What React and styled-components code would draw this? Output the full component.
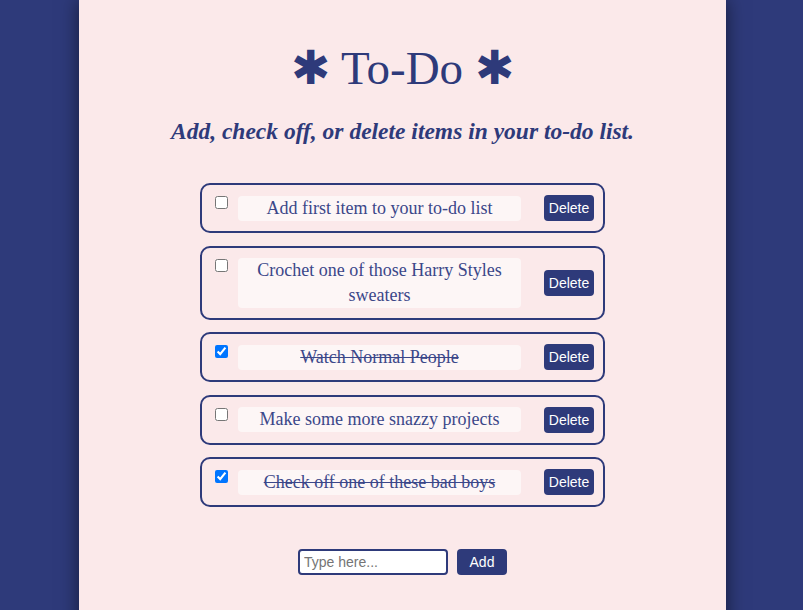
import React, { useState } from 'react'
import styled, { createGlobalStyle } from 'styled-components'

const GlobalStyle = createGlobalStyle`
    html, body {
        margin: 0;
        padding: 0;
        background-color: #2e3a7a;
        height: 100%;
    }
    body {
        font-family: "Liberation Serif", serif;
        overflow: hidden;
        padding-left: 2px;
    }
`

const Panel = styled.div`
    width: 647px;
    min-height: 700px;
    margin: 0 auto;
    background-color: #fbe9ea;
    box-shadow: 0 0 18px rgba(0, 0, 0, 0.55);
    display: flex;
    flex-direction: column;
    align-items: center;
    padding-top: 40px;
    box-sizing: border-box;
    color: #2e3a7a;
`

const Title = styled.h1`
    margin: 0;
    font-family: "Liberation Serif", serif;
    font-weight: normal;
    font-size: 47px;
    line-height: 56px;
`

const Subtitle = styled.h3`
    margin: 21px 0 0 0;
    font-family: "Liberation Serif", serif;
    font-style: italic;
    font-weight: bold;
    font-size: 23.5px;
    line-height: 28px;
`

const List = styled.div`
    display: flex;
    flex-direction: column;
    gap: 12.5px;
    margin-top: 38px;
    width: 405px;
`

const Item = styled.div`
    display: flex;
    align-items: center;
    border: 2px solid #2e3a7a;
    border-radius: 10px;
    padding: 10px 9px 10px 7px;
`

const Check = styled.input`
    align-self: flex-start;
    width: 13px;
    height: 13px;
    margin: 1px 3px 0 6px;
`

const Text = styled.div`
    flex: 1;
    margin-left: 7px;
    margin-right: 23px;
    background-color: #fdf6f6;
    border-radius: 4px;
    text-align: center;
    font-family: "Liberation Serif", serif;
    font-size: 18px;
    line-height: 25px;
    color: #3b4789;
    text-decoration: ${p => (p.$done ? 'line-through' : 'none')};
`

const SmallButton = styled.button`
    width: 50px;
    height: 26px;
    border: none;
    border-radius: 4px;
    background-color: #2e3a7a;
    color: white;
    font-family: "Liberation Sans", Arial, sans-serif;
    font-size: 14px;
    padding: 0;
    cursor: pointer;
`

const AddRow = styled.div`
    display: flex;
    gap: 9px;
    margin-top: 42px;
`

const Input = styled.input`
    width: 150px;
    height: 26px;
    box-sizing: border-box;
    border: 2px solid #2e3a7a;
    border-radius: 4px;
    background: white;
    padding: 0 4px;
    font-family: "Liberation Sans", Arial, sans-serif;
    font-size: 14px;
    outline: none;
`

const initial = [
    { id: 1, text: 'Add first item to your to-do list', done: false },
    { id: 2, text: 'Crochet one of those Harry Styles sweaters', done: false },
    { id: 3, text: 'Watch Normal People', done: true },
    { id: 4, text: 'Make some more snazzy projects', done: false },
    { id: 5, text: 'Check off one of these bad boys', done: true },
]

function App() {
    const [items, setItems] = useState(initial)
    const [value, setValue] = useState('')

    const toggle = id => setItems(items.map(i => (i.id === id ? { ...i, done: !i.done } : i)))
    const remove = id => setItems(items.filter(i => i.id !== id))
    const add = () => {
        if (!value.trim()) return
        setItems([...items, { id: Date.now(), text: value, done: false }])
        setValue('')
    }

    return (
        <>
        <GlobalStyle />
        <Panel>
            <Title>✱ To-Do ✱</Title>
            <Subtitle>Add, check off, or delete items in your to-do list.</Subtitle>
            <List>
                {items.map(item => (
                    <Item key={item.id}>
                        <Check type="checkbox" checked={item.done} onChange={() => toggle(item.id)} />
                        <Text $done={item.done}>{item.text}</Text>
                        <SmallButton onClick={() => remove(item.id)}>Delete</SmallButton>
                    </Item>
                ))}
            </List>
            <AddRow>
                <Input placeholder="Type here..." value={value} onChange={e => setValue(e.target.value)} />
                <SmallButton onClick={add}>Add</SmallButton>
            </AddRow>
        </Panel>
        </>
    )
}

export default App
